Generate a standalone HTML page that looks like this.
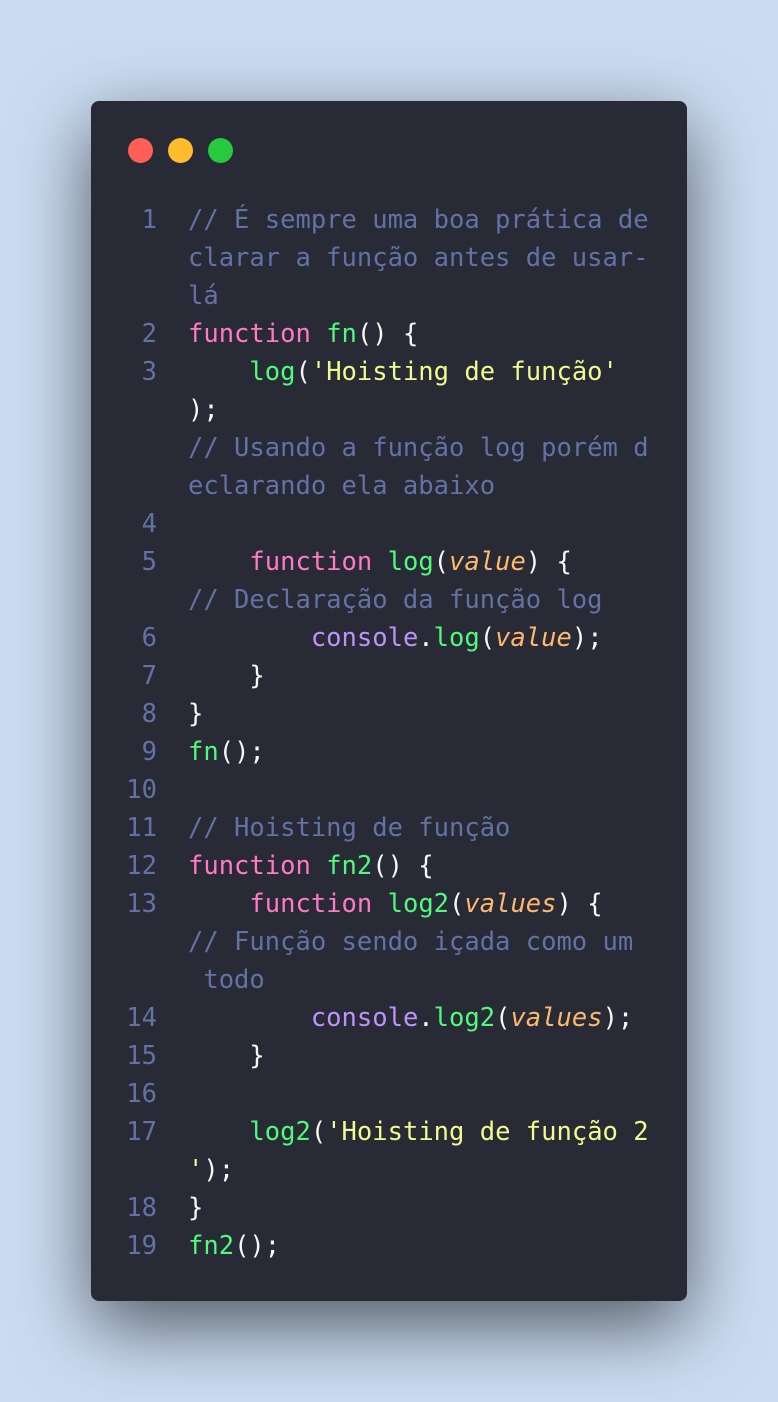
<!DOCTYPE html>
<html><head><meta charset="utf-8"><style>
html,body{margin:0;padding:0}
body{width:778px;height:1402px;background:#cbdcf2;position:relative;overflow:hidden}
.card{position:absolute;left:91px;top:101px;width:596px;height:1200px;background:#282a36;border-radius:8px;box-shadow:0 25px 75px rgba(0,0,0,0.6)}
.dot{position:absolute;top:138px;width:25px;height:25px;border-radius:50%}
.code{position:absolute;left:91px;top:201px;width:596px;font-family:"DejaVu Sans Mono","Liberation Mono",monospace;font-size:25.5px;color:#f8f8f2}
.r{height:38px;line-height:38px;position:relative;white-space:pre}
.n{position:absolute;right:530px;color:#6272a4;text-align:right}
.t{position:absolute;left:97px}
.c{color:#6272a4}.k{color:#ff79c6}.f{color:#50fa7b}.s{color:#f1fa8c}.p{color:#ffb86c;font-style:italic}.v{color:#bd93f9}
</style></head><body>
<div class="card"></div>
<div class="dot" style="left:128px;background:#ff5f56"></div>
<div class="dot" style="left:168px;background:#ffbd2e"></div>
<div class="dot" style="left:208px;background:#27c93f"></div>
<div class="code">
<div class="r"><span class="n">1</span><span class="t c">// É sempre uma boa prática de</span></div>
<div class="r"><span class="t c">clarar a função antes de usar-</span></div>
<div class="r"><span class="t c">lá</span></div>
<div class="r"><span class="n">2</span><span class="t"><span class="k">function</span> <span class="f">fn</span>() {</span></div>
<div class="r"><span class="n">3</span><span class="t">    <span class="f">log</span>(<span class="s">'Hoisting de função'</span></span></div>
<div class="r"><span class="t">);</span></div>
<div class="r"><span class="t c">// Usando a função log porém d</span></div>
<div class="r"><span class="t c">eclarando ela abaixo</span></div>
<div class="r"><span class="n">4</span></div>
<div class="r"><span class="n">5</span><span class="t">    <span class="k">function</span> <span class="f">log</span>(<span class="p">value</span>) {</span></div>
<div class="r"><span class="t c">// Declaração da função log</span></div>
<div class="r"><span class="n">6</span><span class="t">        <span class="v">console</span>.<span class="f">log</span>(<span class="p">value</span>);</span></div>
<div class="r"><span class="n">7</span><span class="t">    }</span></div>
<div class="r"><span class="n">8</span><span class="t">}</span></div>
<div class="r"><span class="n">9</span><span class="t"><span class="f">fn</span>();</span></div>
<div class="r"><span class="n">10</span></div>
<div class="r"><span class="n">11</span><span class="t c">// Hoisting de função</span></div>
<div class="r"><span class="n">12</span><span class="t"><span class="k">function</span> <span class="f">fn2</span>() {</span></div>
<div class="r"><span class="n">13</span><span class="t">    <span class="k">function</span> <span class="f">log2</span>(<span class="p">values</span>) {</span></div>
<div class="r"><span class="t c">// Função sendo içada como um</span></div>
<div class="r"><span class="t c"> todo</span></div>
<div class="r"><span class="n">14</span><span class="t">        <span class="v">console</span>.<span class="f">log2</span>(<span class="p">values</span>);</span></div>
<div class="r"><span class="n">15</span><span class="t">    }</span></div>
<div class="r"><span class="n">16</span></div>
<div class="r"><span class="n">17</span><span class="t">    <span class="f">log2</span>(<span class="s">'Hoisting de função 2</span></span></div>
<div class="r"><span class="t"><span class="s">'</span>);</span></div>
<div class="r"><span class="n">18</span><span class="t">}</span></div>
<div class="r"><span class="n">19</span><span class="t"><span class="f">fn2</span>();</span></div>
</div>
</body></html>
